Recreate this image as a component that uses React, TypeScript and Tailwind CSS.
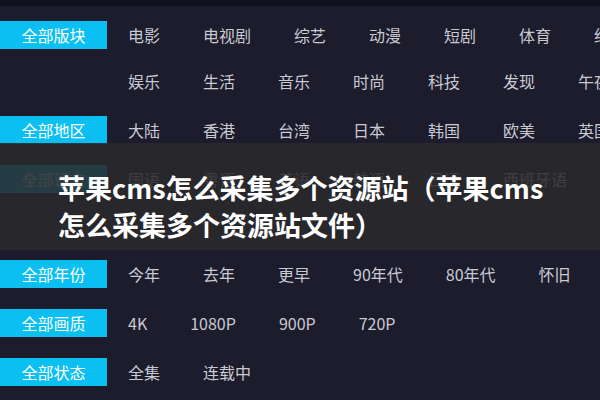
import React from "react";

const font = { fontFamily: '"Noto Sans CJK SC", "Noto Sans", sans-serif' };

type Block = { label: string; lines: string[][] };

const blocks: Block[] = [
  {
    label: "全部版块",
    lines: [
      ["电影", "电视剧", "综艺", "动漫", "短剧", "体育", "纪录片"],
      ["娱乐", "生活", "音乐", "时尚", "科技", "发现", "午夜"],
    ],
  },
  { label: "全部地区", lines: [["大陆", "香港", "台湾", "日本", "韩国", "欧美", "英国"]] },
  {
    label: "全部语言",
    lines: [["国语", "粤语", "英语", "韩语", "日语", "西班牙语"], []],
  },
  { label: "全部年份", lines: [["今年", "去年", "更早", "90年代", "80年代", "怀旧"]] },
  { label: "全部画质", lines: [["4K", "1080P", "900P", "720P"]] },
  { label: "全部状态", lines: [["全集", "连载中"]] },
];

export default function App() {
  return (
    <div
      className="relative w-[600px] h-[400px] overflow-hidden bg-[#1c1c2c]"
      style={font}
    >
      <div className="h-[6px] bg-[#11111d]" />
      <div className="flex flex-col gap-[21px] pt-[15px]">
        {blocks.map((b) => (
          <div key={b.label} className="flex gap-[21px]">
            <div className="w-[107px] h-[28px] shrink-0 bg-[#0bbff2] text-white text-[16px] leading-[28px] text-center">
              {b.label}
            </div>
            <div className="flex flex-col gap-[18px]">
              {b.lines.map((line, i) => (
                <div
                  key={i}
                  className="flex gap-[43px] h-[28px] items-center whitespace-nowrap text-[16px] text-[#c9c9d2]"
                >
                  {line.map((it) => (
                    <span key={it}>{it}</span>
                  ))}
                </div>
              ))}
            </div>
          </div>
        ))}
      </div>

      <div className="absolute left-0 right-0 top-[143px] h-[107px] bg-[#2a2a2c]/[0.88]">
        <div className="pl-[58px] pt-[26px] text-white font-bold text-[27px] leading-[37px] whitespace-nowrap">
          苹果cms怎么采集多个资源站（苹果cms
          <br />
          怎么采集多个资源站文件）
        </div>
      </div>
    </div>
  );
}
